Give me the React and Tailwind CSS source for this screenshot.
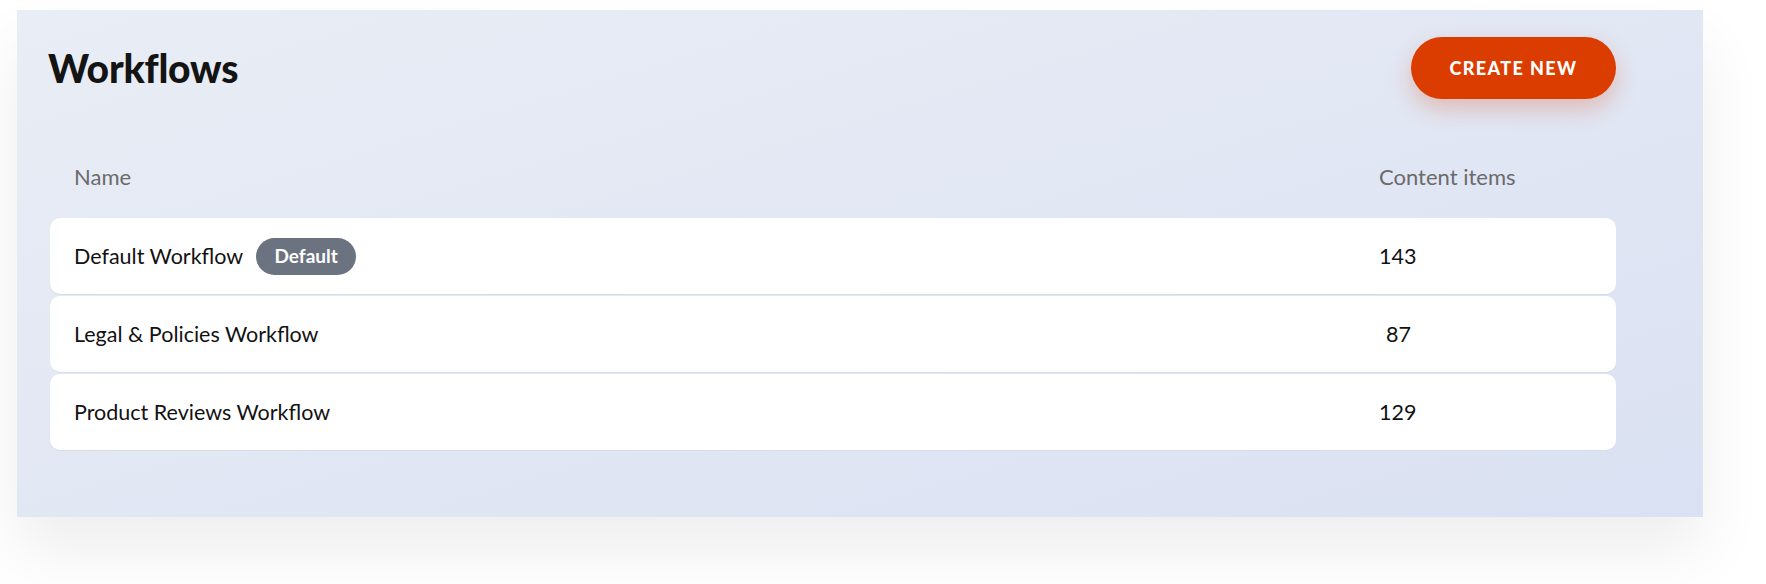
import React from 'react';

const workflows = [
    { id: 1, name: 'Default Workflow', count: 143, isDefault: true },
    { id: 2, name: 'Legal & Policies Workflow', count: 87 },
    { id: 3, name: 'Product Reviews Workflow', count: 129 },
];

export default function App() {
    return (
        <div className="w-full h-[584px] bg-white overflow-hidden font-['Lato','Liberation_Sans',sans-serif]">
            {/* Panel */}
            <div className="ml-[17px] mt-[10px] w-[1686px] h-[507px] bg-gradient-to-br from-[#e9edf5] to-[#dae1f2] shadow-[0_34px_60px_rgba(0,0,0,0.07)] pl-[33px] pr-[87px] pt-[27px]">
                {/* Header */}
                <div className="flex items-center justify-between h-[62px]">
                    <h1 className="-ml-[2px] text-[39px] font-black text-[#141414] tracking-[-0.2px] leading-none">
                        Workflows
                    </h1>
                    <button className="w-[205px] h-[62px] rounded-full bg-[#db3c00] text-white text-[18px] font-black tracking-[1.4px] shadow-[0_10px_22px_rgba(219,60,0,0.25)]">
                        CREATE NEW
                    </button>
                </div>

                {/* Column labels */}
                <div className="flex items-center pl-[24px] mt-[63px] h-[28px] text-[22px] text-[#6b6b6b]">
                    <div className="flex-1">Name</div>
                    <div className="w-[237px]">Content items</div>
                </div>

                {/* Rows */}
                <div className="mt-[28px] flex flex-col gap-[2px]">
                    {workflows.map((wf) => (
                        <div
                            key={wf.id}
                            className="flex items-center h-[76px] pl-[24px] bg-white rounded-[10px] shadow-[0_1px_0_#d6dcea] text-[21.5px] text-[#121212]"
                        >
                            <div className="flex-1 flex items-center gap-[13px]">
                                <span>{wf.name}</span>
                                {wf.isDefault && (
                                    <span className="h-[37px] w-[100px] rounded-full bg-[#6b7280] text-white text-[19px] font-bold flex items-center justify-center">
                                        Default
                                    </span>
                                )}
                            </div>
                            <div className="w-[237px]">
                                <span className="inline-block w-[32px] text-right">{wf.count}</span>
                            </div>
                        </div>
                    ))}
                </div>
            </div>
        </div>
    );
}
